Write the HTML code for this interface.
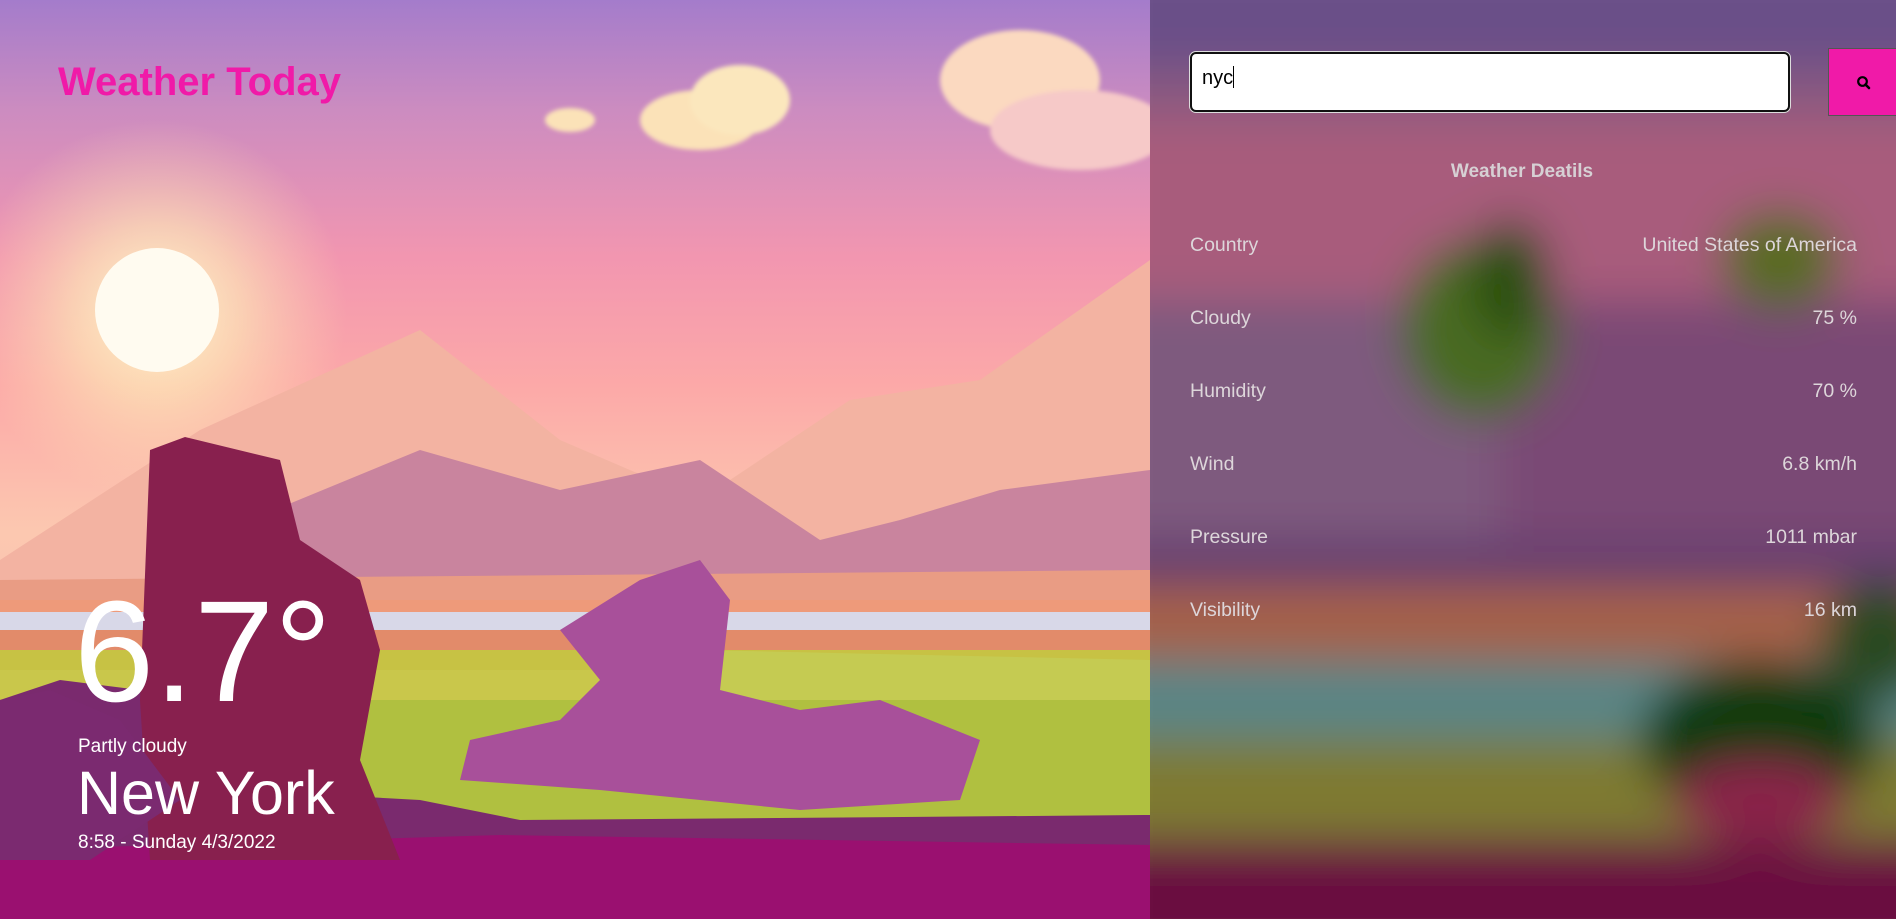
<!DOCTYPE html>
<html><head><meta charset="utf-8"><style>
html,body{margin:0;padding:0;width:1896px;height:919px;overflow:hidden;font-family:"Liberation Sans",Arial,sans-serif}
#w{position:relative;width:1896px;height:919px;overflow:hidden}
.abs{position:absolute}
svg{position:absolute;left:0;top:0;display:block}
</style></head><body><div id="w">
<svg width="1896" height="919" viewBox="0 0 1896 919">
<defs>
<linearGradient id="sky" x1="0" y1="0" x2="0" y2="1">
<stop offset="0" stop-color="#a47ccb"/><stop offset="0.12" stop-color="#cc8cc0"/>
<stop offset="0.28" stop-color="#f296b0"/><stop offset="0.42" stop-color="#fca9a8"/>
<stop offset="0.58" stop-color="#fcc8b0"/><stop offset="0.7" stop-color="#f7c0b0"/><stop offset="1" stop-color="#f0b0a8"/>
</linearGradient>
<radialGradient id="glow" cx="0.5" cy="0.5" r="0.5">
<stop offset="0" stop-color="#fff8d0" stop-opacity="1"/><stop offset="0.45" stop-color="#fdf0b8" stop-opacity="0.6"/><stop offset="1" stop-color="#fde0b0" stop-opacity="0"/>
</radialGradient>
<filter id="bl" x="-10%" y="-10%" width="120%" height="120%"><feGaussianBlur stdDeviation="22"/></filter>
<filter id="bs"><feGaussianBlur stdDeviation="2"/></filter>
</defs>
<rect width="1150" height="919" fill="url(#sky)"/>
<circle cx="157" cy="310" r="190" fill="url(#glow)"/>
<g filter="url(#bs)">
<ellipse cx="700" cy="120" rx="60" ry="30" fill="#fbe2b8"/>
<ellipse cx="740" cy="100" rx="50" ry="35" fill="#fbe7bd"/>
<ellipse cx="1020" cy="80" rx="80" ry="50" fill="#fbd9c0"/>
<ellipse cx="1080" cy="130" rx="90" ry="40" fill="#f6c9c8"/>
<ellipse cx="570" cy="120" rx="25" ry="12" fill="#fbe2b8"/>
</g>
<circle cx="157" cy="310" r="62" fill="#fffbf0"/>
<polygon points="0,560 200,430 420,330 560,440 700,500 850,400 980,380 1150,260 1150,600 0,600" fill="#f3b3a2"/>
<polygon points="250,520 420,450 560,490 700,460 820,540 900,520 1000,490 1150,470 1150,600 250,600" fill="#c9849e"/>
<polygon points="0,580 1150,570 1150,610 0,610" fill="#e99c84"/>
<rect x="0" y="600" width="1150" height="30" fill="#ee9a7a"/>
<rect x="0" y="612" width="1150" height="20" fill="#d8d8e8"/>
<rect x="0" y="630" width="1150" height="40" fill="#e28b6a"/>
<polygon points="700,650 1150,660 1150,720 700,700" fill="#c8e8ee"/>
<rect x="0" y="650" width="1150" height="200" fill="#c4c840" opacity="0.9"/>
<rect x="0" y="700" width="1150" height="150" fill="#b0c040"/>
<polygon points="0,700 60,680 140,690 240,790 420,800 520,820 1150,815 1150,919 0,919" fill="#7a2a6e"/>
<polygon points="0,850 500,835 1150,845 1150,919 0,919" fill="#9a1070"/>
<polygon points="150,450 185,437 280,460 300,540 360,580 380,650 360,760 400,860 150,860 140,700" fill="#88204e"/>
<polygon points="560,630 640,580 700,560 730,600 720,690 800,710 880,700 980,740 960,800 800,810 600,790 460,780 470,740 560,720 600,680" fill="#a8509a"/>
<polygon points="0,700 50,690 120,720 180,800 90,860 0,860" fill="#7b2a70"/>
</svg>
<svg width="1896" height="919" viewBox="0 0 1896 919" style="clip-path:inset(0 0 0 1150px)">
<g filter="url(#bl)">
<rect x="1100" y="-50" width="850" height="1050" fill="#8a5a80"/>
<rect x="1100" y="-50" width="850" height="120" fill="#6a4f88"/>
<rect x="1100" y="120" width="850" height="180" fill="#a85c7c"/>
<rect x="1100" y="300" width="850" height="240" fill="#7e5a7e"/>
<rect x="1500" y="300" width="450" height="240" fill="#7a4a75"/>
<rect x="1100" y="540" width="850" height="50" fill="#653c70"/>
<rect x="1100" y="585" width="850" height="80" fill="#a5604a"/>
<rect x="1100" y="660" width="850" height="80" fill="#5a8585"/>
<rect x="1100" y="740" width="850" height="100" fill="#7e7a30"/>
<rect x="1100" y="840" width="850" height="120" fill="#6a0e40"/>
<ellipse cx="1480" cy="330" rx="80" ry="90" fill="#4a6a20"/>
<ellipse cx="1510" cy="280" rx="40" ry="60" fill="#2a5010"/>
<ellipse cx="1780" cy="260" rx="60" ry="50" fill="#5a6a20"/>
<ellipse cx="1760" cy="740" rx="120" ry="80" fill="#0a3a10"/>
<ellipse cx="1880" cy="640" rx="60" ry="60" fill="#2a4a20"/>
<ellipse cx="1760" cy="800" rx="90" ry="40" fill="#8a2048"/>
</g>
</svg>
<div class="abs" style="left:58px;top:60px;font-size:40px;font-weight:bold;color:#f01aa8">Weather Today</div>
<div class="abs" style="left:74px;top:580px;font-size:144px;color:#fff;line-height:1">6.7°</div>
<div class="abs" style="left:78px;top:736px;font-size:19px;color:#fff">Partly cloudy</div>
<div class="abs" style="left:77px;top:763px;font-size:61px;color:#fff;line-height:1">New York</div>
<div class="abs" style="left:78px;top:832px;font-size:19px;color:#fff">8:58 - Sunday 4/3/2022</div>
<div class="abs" style="left:1190px;top:52px;width:596px;height:56px;background:#fff;border:2px solid #111;border-radius:6px;box-shadow:0 0 0 1px #ddd"></div>
<div class="abs" style="left:1202px;top:66px;font-size:20px;color:#000">nyc<span style="display:inline-block;width:1px;height:22px;background:#000;vertical-align:-4px"></span></div>
<div class="abs" style="left:1828px;top:48px;width:70px;height:68px;background:#f01aa8;border:1px solid #555;box-sizing:border-box"></div>
<svg class="abs" style="left:1856px;top:75px" width="16" height="16" viewBox="0 0 16 16"><circle cx="6.5" cy="6.5" r="4.3" fill="none" stroke="#000" stroke-width="2.2"/><line x1="9.5" y1="9.5" x2="13" y2="13" stroke="#000" stroke-width="2.6" stroke-linecap="round"/></svg>
<div class="abs" style="left:1150px;top:161px;width:746px;text-align:center;font-size:19px;font-weight:bold;color:#d6d0d4;padding-right:2px;box-sizing:border-box">Weather Deatils</div>
<div class="abs" style="left:1190px;top:234px;width:667px;font-size:19.5px;color:#ddd6da;line-height:22px">
<div style="display:flex;justify-content:space-between;height:73px"><span>Country</span><span>United States of America</span></div>
<div style="display:flex;justify-content:space-between;height:73px"><span>Cloudy</span><span>75 %</span></div>
<div style="display:flex;justify-content:space-between;height:73px"><span>Humidity</span><span>70 %</span></div>
<div style="display:flex;justify-content:space-between;height:73px"><span>Wind</span><span>6.8 km/h</span></div>
<div style="display:flex;justify-content:space-between;height:73px"><span>Pressure</span><span>1011 mbar</span></div>
<div style="display:flex;justify-content:space-between;height:73px"><span>Visibility</span><span>16 km</span></div>
</div>
</div></body></html>
